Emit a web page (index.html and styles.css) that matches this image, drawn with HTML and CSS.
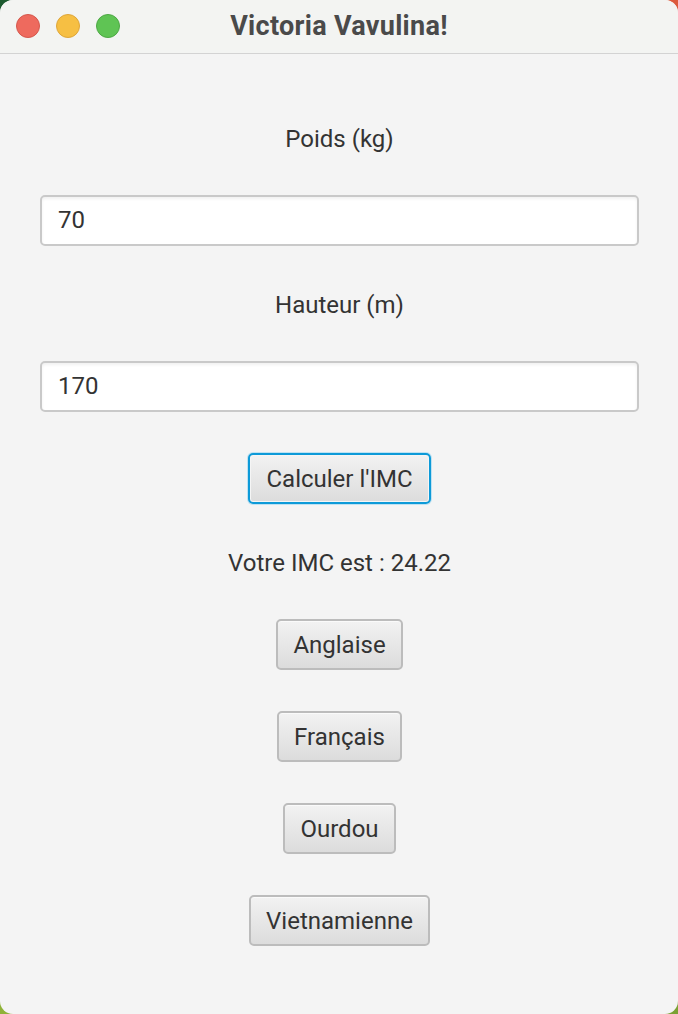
FILE: index.html
```html
<!DOCTYPE html>
<html lang="fr">
<head>
<meta charset="utf-8">
<title>Victoria Vavulina!</title>
<link rel="stylesheet" href="styles.css">
</head>
<body>
<div class="window">
  <header class="titlebar">
    <div class="lights">
      <span class="light red"></span>
      <span class="light yellow"></span>
      <span class="light green"></span>
    </div>
    <div class="title">Victoria Vavulina!</div>
  </header>
  <main class="content">
    <div class="label">Poids (kg)</div>
    <div class="field">70</div>
    <div class="label">Hauteur (m)</div>
    <div class="field">170</div>
    <button class="btn focused">Calculer l'IMC</button>
    <div class="label">Votre IMC est : 24.22</div>
    <button class="btn">Anglaise</button>
    <button class="btn">Français</button>
    <button class="btn">Ourdou</button>
    <button class="btn">Vietnamienne</button>
  </main>
</div>
</body>
</html>
```

FILE: styles.css
```css
html, body {
  margin: 0;
  padding: 0;
  height: 1014px;
  overflow: hidden;
}
body {
  background:
    linear-gradient(to right, #1d5a2f 50%, #dc5a3e 50%) top / 100% 50% no-repeat,
    linear-gradient(to right, #8fb238 50%, #7ba133 50%) bottom / 100% 50% no-repeat;
  font-family: Roboto, "Liberation Sans", sans-serif;
  color: #333;
}
.window {
  width: 678px;
  height: 1014px;
  border-radius: 13px;
  overflow: hidden;
  background: #f4f4f4;
  display: flex;
  flex-direction: column;
}
.titlebar {
  height: 53px;
  flex: none;
  background: #f3f4f2;
  border-bottom: 1px solid #d3d3d3;
  position: relative;
  display: flex;
  align-items: center;
  justify-content: center;
}
.lights {
  position: absolute;
  left: 16px;
  top: 14px;
  display: flex;
  gap: 16px;
}
.light {
  width: 24px;
  height: 24px;
  border-radius: 50%;
  box-sizing: border-box;
}
.red { background: #ee6a5e; border: 1px solid #d5584d; }
.yellow { background: #f6bf43; border: 1px solid #dea63a; }
.green { background: #5fc454; border: 1px solid #4ea845; }
.title {
  font-weight: 700;
  font-size: 27px;
  letter-spacing: 0.3px;
  color: #4a4a4a;
  margin-top: -2px;
}
.content {
  display: flex;
  flex-direction: column;
  align-items: center;
  gap: 41px;
  padding: 67px 39px 0 40px;
}
.label {
  font-size: 24px;
  line-height: 30px;
  padding-top: 3px;
  color: #333;
}
.field {
  align-self: stretch;
  height: 51px;
  box-sizing: border-box;
  background: #fff;
  border: 2px solid #c9c9c9;
  border-radius: 5px;
  font-size: 24px;
  line-height: 47px;
  padding-left: 16px;
  color: #333;
  box-shadow: inset 0 2px 3px rgba(0,0,0,0.06);
}
.btn {
  height: 51px;
  box-sizing: border-box;
  font-family: Roboto, "Liberation Sans", sans-serif;
  font-size: 24px;
  color: #333;
  padding: 0 15px;
  border: 2px solid #bcbcbc;
  border-radius: 5px;
  background: linear-gradient(#f2f2f2, #dcdcdc);
  box-shadow: inset 0 1px 0 #fafafa;
}
.btn.focused {
  border-color: #0d9ad8;
  box-shadow: 0 0 0 1px #bfe2f2, inset 0 0 0 1px #f5f5f5;
  padding: 0 16px;
}
```
